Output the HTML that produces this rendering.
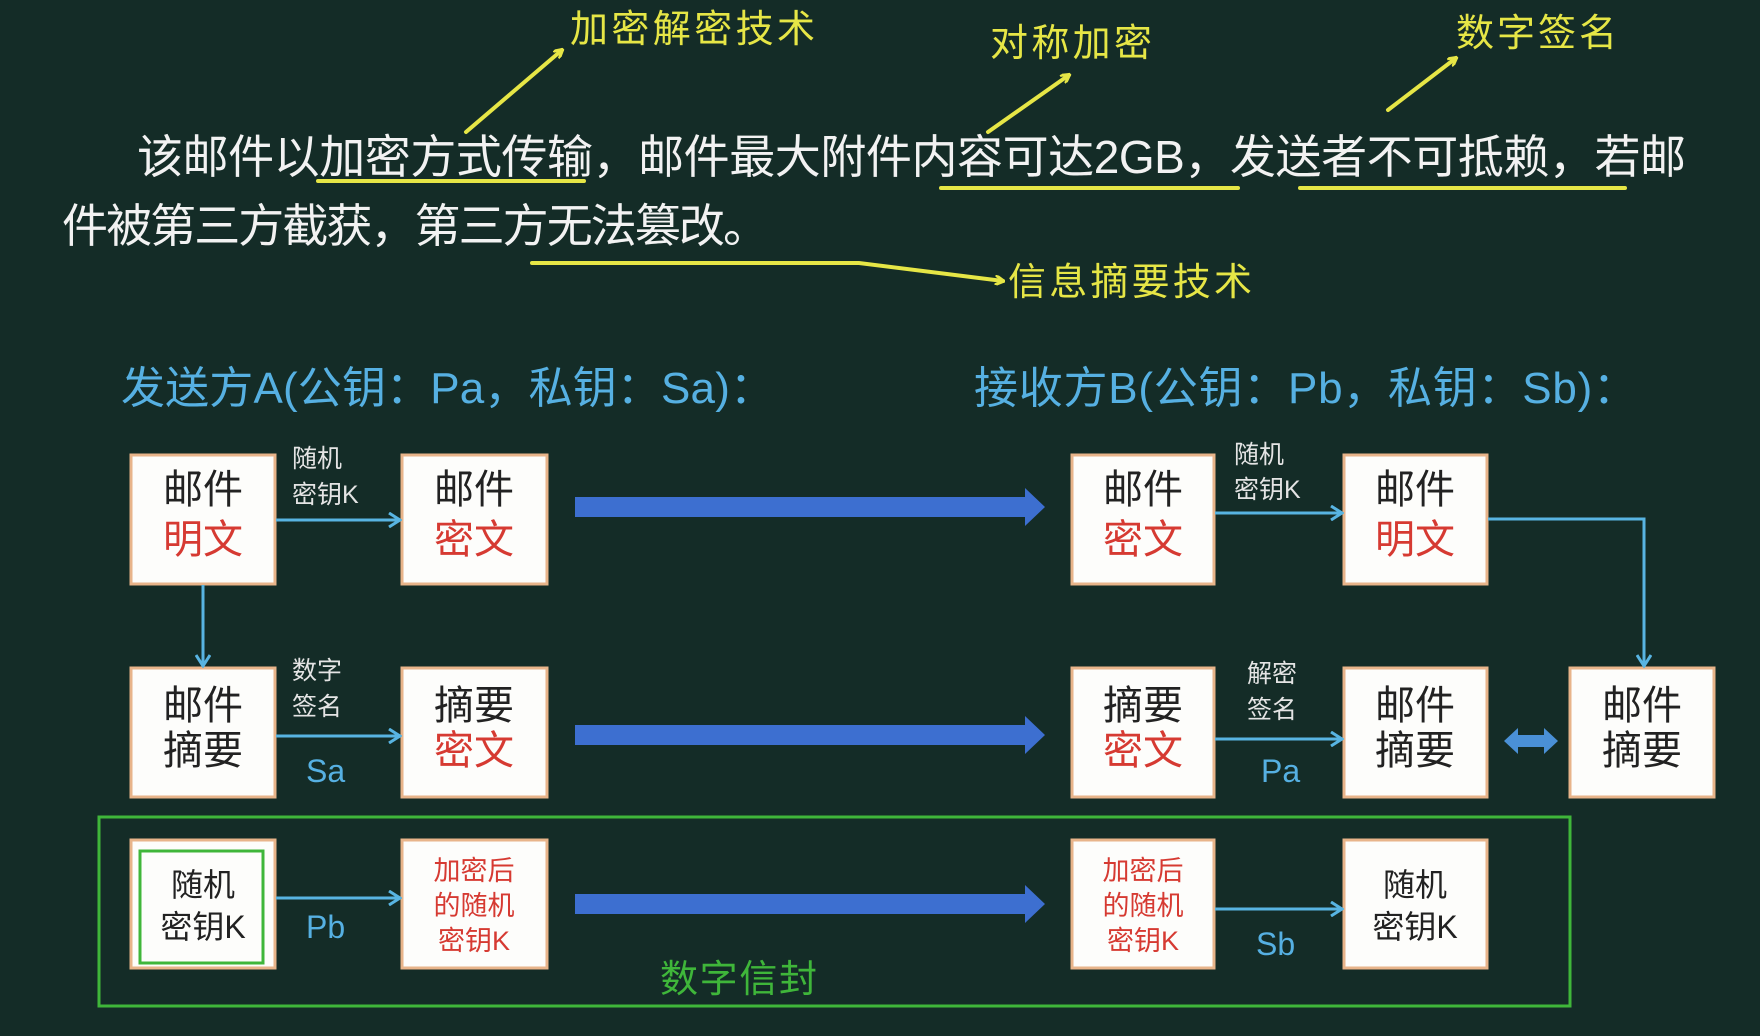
<!DOCTYPE html>
<html><head><meta charset="utf-8"><style>
html,body{margin:0;padding:0;background:#142c27;}
svg{display:block;}
text{font-family:"Liberation Sans","Noto Sans CJK SC",sans-serif;}
</style></head><body>
<svg width="1760" height="1036" viewBox="0 0 1760 1036" xmlns="http://www.w3.org/2000/svg">
<defs>
<marker id="ya" markerWidth="10" markerHeight="10" refX="8" refY="5" orient="auto" markerUnits="userSpaceOnUse"><path d="M0,0 L9,5 L0,10" fill="none" stroke="#e6e646" stroke-width="3"/></marker>
<marker id="ba" markerWidth="14" markerHeight="16" refX="12" refY="8" orient="auto" markerUnits="userSpaceOnUse"><path d="M1,1 L12,8 L1,15" fill="none" stroke="#58b4e2" stroke-width="3"/></marker>
</defs>
<rect width="1760" height="1036" fill="#142c27"/>

<!-- yellow annotations -->
<g fill="#e6e646" font-size="38">
<text x="570" y="42" textLength="245">加密解密技术</text>
<text x="990" y="56" textLength="162">对称加密</text>
<text x="1456" y="46" textLength="161">数字签名</text>
<text x="1008" y="295" textLength="244">信息摘要技术</text>
</g>
<g stroke="#e6e646" stroke-width="4" fill="none" stroke-linecap="round">
<line x1="466" y1="132" x2="562" y2="50" marker-end="url(#ya)"/>
<line x1="988" y1="132" x2="1069" y2="75" marker-end="url(#ya)"/>
<line x1="1388" y1="110" x2="1456" y2="58" marker-end="url(#ya)"/>
<line x1="318" y1="181" x2="584" y2="181"/>
<line x1="941" y1="188" x2="1238" y2="188"/>
<line x1="1300" y1="188" x2="1625" y2="188"/>
<polyline points="532,263 859,263 1003,281" marker-end="url(#ya)"/>
</g>

<!-- main text -->
<g fill="#f2f2f2" font-size="46">
<text x="137" y="173" textLength="1549">该邮件以加密方式传输，邮件最大附件内容可达2GB，发送者不可抵赖，若邮</text>
<text x="62" y="242" textLength="707">件被第三方截获，第三方无法篡改。</text>
</g>

<!-- headers -->
<g fill="#56b0e2" font-size="44">
<text x="121" y="403" textLength="653">发送方A(公钥：Pa，私钥：Sa)：</text>
<text x="974" y="403" textLength="663">接收方B(公钥：Pb，私钥：Sb)：</text>
</g>

<!-- green envelope -->
<rect x="99" y="817" width="1471" height="189" fill="none" stroke="#3fb63a" stroke-width="3"/>
<text x="660" y="992" fill="#3fb63a" font-size="38" textLength="157">数字信封</text>

<!-- big arrows -->
<g fill="#3d6fd0">
<path d="M575,497 H1025 V488 L1045,507 L1025,526 V517 H575 Z"/>
<path d="M575,725 H1025 V716 L1045,735 L1025,754 V745 H575 Z"/>
<path d="M575,894 H1025 V885 L1045,904 L1025,923 V914 H575 Z"/>
</g>
<!-- double arrow -->
<path d="M1504,741 L1518,728 V735 H1544 V728 L1558,741 L1544,754 V747 H1518 V754 Z" fill="#4a90d6"/>

<!-- boxes -->
<g fill="#fdfdfb" stroke="#e8b48a" stroke-width="3">
<rect x="131" y="455" width="144" height="129"/>
<rect x="402" y="455" width="145" height="129"/>
<rect x="1072" y="455" width="142" height="129"/>
<rect x="1344" y="455" width="143" height="129"/>
<rect x="131" y="668" width="144" height="129"/>
<rect x="402" y="668" width="145" height="129"/>
<rect x="1072" y="668" width="142" height="129"/>
<rect x="1344" y="668" width="143" height="129"/>
<rect x="1570" y="668" width="144" height="129"/>
<rect x="131" y="840" width="144" height="128"/>
<rect x="402" y="840" width="145" height="128"/>
<rect x="1072" y="840" width="142" height="128"/>
<rect x="1344" y="840" width="143" height="128"/>
</g>
<rect x="140" y="851" width="123" height="112" fill="none" stroke="#3fb63a" stroke-width="3"/>

<!-- box texts -->
<g font-size="40" text-anchor="middle" fill="#222">
<text x="203" y="503">邮件</text><text x="203" y="553" fill="#d63a32">明文</text>
<text x="474" y="503">邮件</text><text x="474" y="553" fill="#d63a32">密文</text>
<text x="1143" y="503">邮件</text><text x="1143" y="553" fill="#d63a32">密文</text>
<text x="1415" y="503">邮件</text><text x="1415" y="553" fill="#d63a32">明文</text>
<text x="203" y="719">邮件</text><text x="203" y="764">摘要</text>
<text x="474" y="719">摘要</text><text x="474" y="764" fill="#d63a32">密文</text>
<text x="1143" y="719">摘要</text><text x="1143" y="764" fill="#d63a32">密文</text>
<text x="1415" y="719">邮件</text><text x="1415" y="764">摘要</text>
<text x="1642" y="719">邮件</text><text x="1642" y="764">摘要</text>
</g>
<g font-size="32" text-anchor="middle" fill="#222">
<text x="203" y="896">随机</text><text x="203" y="938">密钥K</text>
<text x="1415" y="896">随机</text><text x="1415" y="938">密钥K</text>
</g>
<g font-size="27" text-anchor="middle" fill="#d63a32">
<text x="474" y="880">加密后</text><text x="474" y="915">的随机</text><text x="474" y="950">密钥K</text>
<text x="1143" y="880">加密后</text><text x="1143" y="915">的随机</text><text x="1143" y="950">密钥K</text>
</g>

<!-- blue connectors -->
<g stroke="#58b4e2" stroke-width="3" fill="none">
<line x1="276" y1="520" x2="400" y2="520" marker-end="url(#ba)"/>
<line x1="1215" y1="513" x2="1342" y2="513" marker-end="url(#ba)"/>
<polyline points="1488,519 1644,519 1644,666" marker-end="url(#ba)"/>
<line x1="203" y1="585" x2="203" y2="666" marker-end="url(#ba)"/>
<line x1="276" y1="736" x2="400" y2="736" marker-end="url(#ba)"/>
<line x1="1215" y1="739" x2="1342" y2="739" marker-end="url(#ba)"/>
<line x1="276" y1="898" x2="400" y2="898" marker-end="url(#ba)"/>
<line x1="1215" y1="909" x2="1342" y2="909" marker-end="url(#ba)"/>
</g>

<!-- small labels -->
<g font-size="25" fill="#e4e4e4">
<text x="292" y="467">随机</text><text x="292" y="503">密钥K</text>
<text x="292" y="679">数字</text><text x="292" y="715">签名</text>
<text x="1234" y="463">随机</text><text x="1234" y="498">密钥K</text>
<text x="1247" y="682">解密</text><text x="1247" y="718">签名</text>
</g>
<g font-size="32" fill="#56b0e2">
<text x="306" y="782">Sa</text>
<text x="306" y="938">Pb</text>
<text x="1261" y="782">Pa</text>
<text x="1256" y="955">Sb</text>
</g>
</svg>
</body></html>
